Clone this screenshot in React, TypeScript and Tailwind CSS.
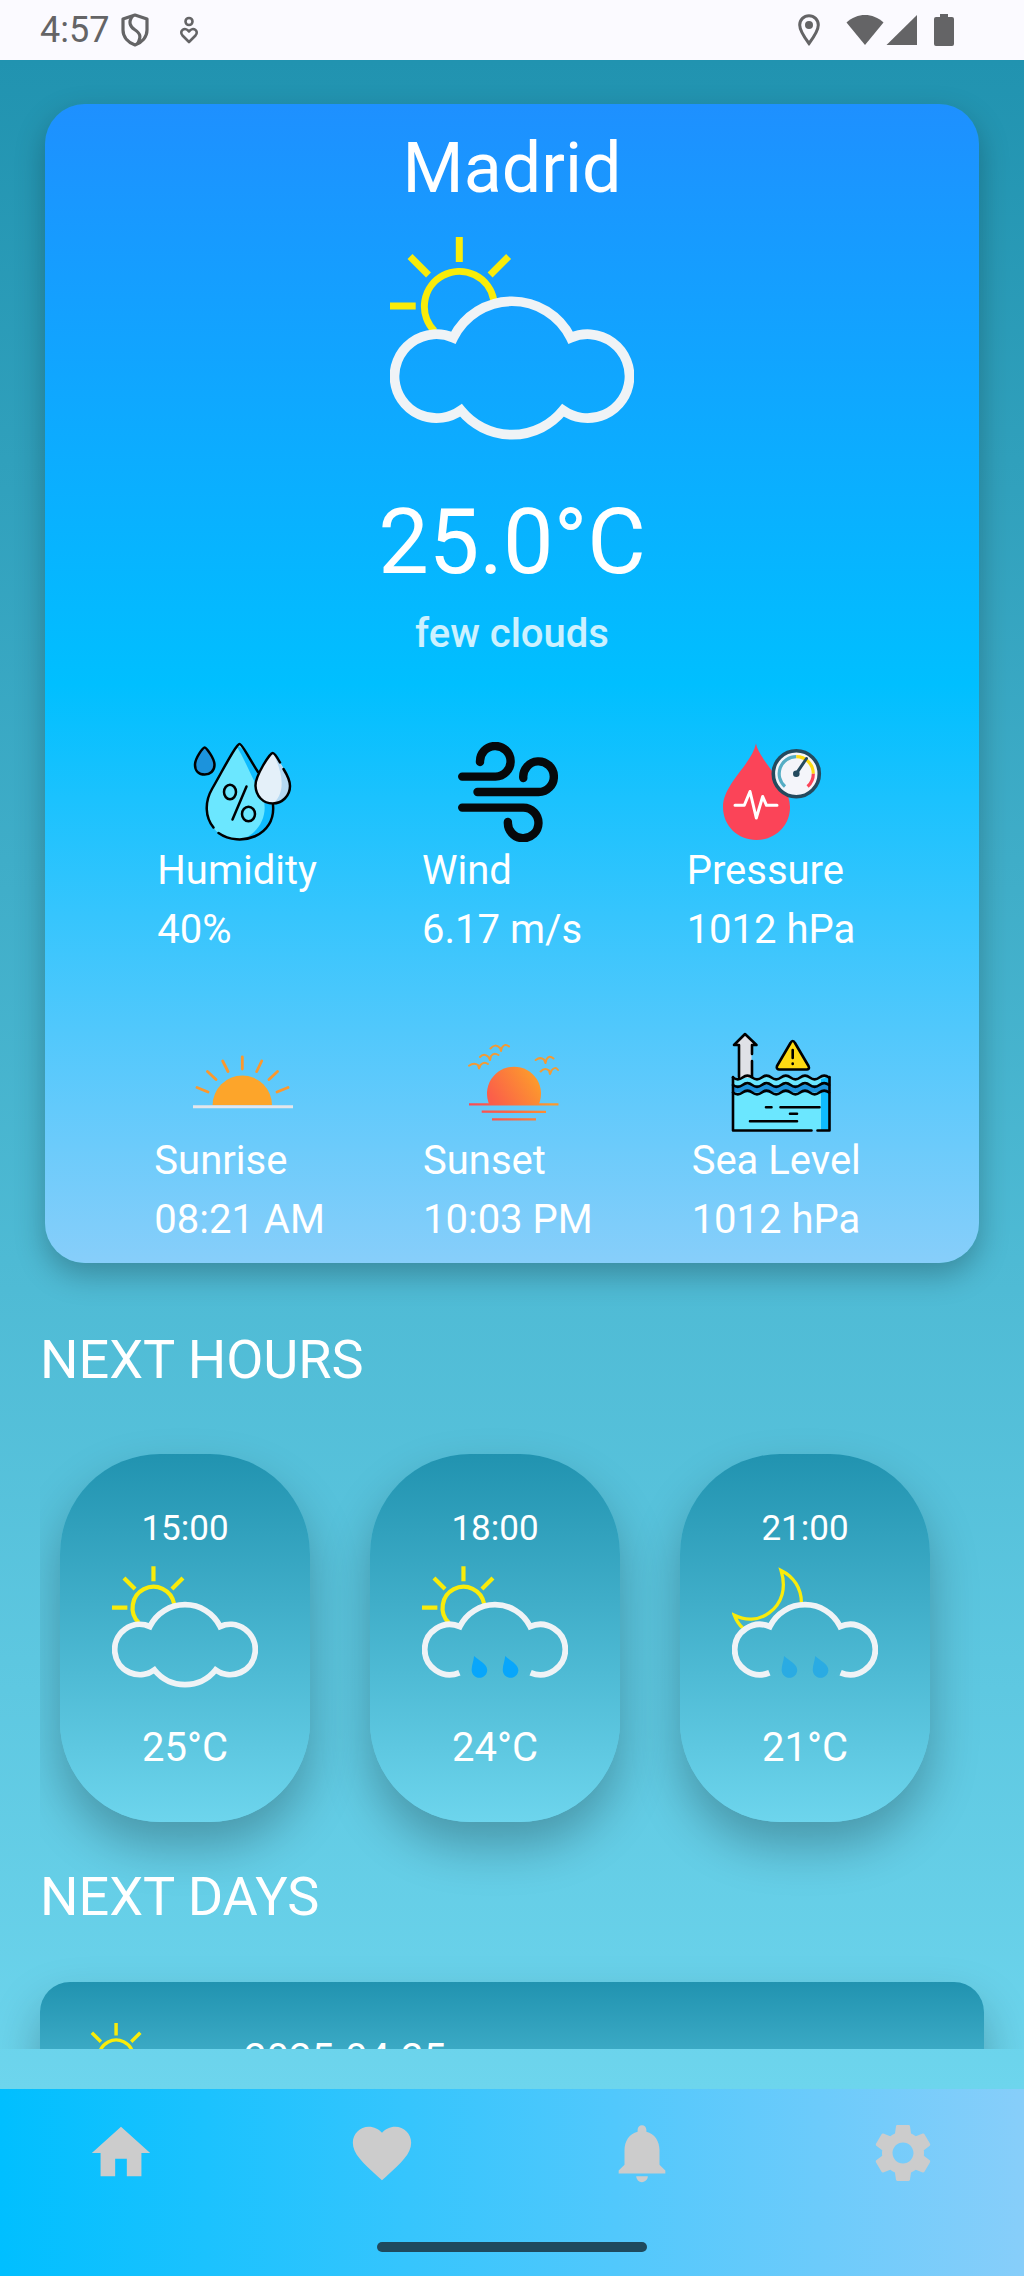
import type { ReactNode } from "react";
import { MdFavorite, MdHome, MdNotifications, MdSettings } from "react-icons/md";

type Sky = "few-clouds" | "rain-day" | "rain-night";

const CLOUD =
  "M63.3 100.7A65.5 65.5 0 0 1 180.7 100.7A42 42 0 1 1 173 173.3A65.5 65.5 0 0 1 71 173.3A42 42 0 1 1 63.3 100.7Z";
const OPEN_CLOUD =
  "M62.5 178A42 42 0 1 1 63.3 100.7A65.5 65.5 0 0 1 180.7 100.7A42 42 0 1 1 181.5 178";
const RAINDROP =
  "M87 150C94 157 109 163 109 173.5C109 181 103 186.5 96 186.5C89 186.5 83 181 83 173C83 165 86.5 158 87 150Z";

function SkyIcon({ sky, className }: { sky: Sky; className: string }) {
  return (
    <svg viewBox="0 0 244 203" className={className} fill="none" aria-hidden="true">
      <g stroke="#f9ec0a">
        {sky === "rain-night" ? (
          <path
            d="M18 103C11 97 7 90 4 82C22 91 44 91 62 78C84 62 91 36 82 7C103 17 116 37 116 61"
            strokeWidth="5.5"
          />
        ) : (
          <path
            d="M44.5 94A35 35 0 1 1 103.8 63M69.3 0V25M0 69H25.7M20 19.5L38.5 38M118.6 19.5L100.1 38"
            strokeWidth="7"
          />
        )}
      </g>
      <path d={sky === "few-clouds" ? CLOUD : OPEN_CLOUD} stroke="#eff3f6" strokeWidth="9.7" />
      {sky !== "few-clouds" && (
        <g fill={sky === "rain-day" ? "#08a6fb" : "#2aabe3"}>
          <path d={RAINDROP} />
          <path d={RAINDROP} transform="translate(52 0)" />
        </g>
      )}
    </svg>
  );
}

function StatIcon({ children }: { children: ReactNode }) {
  return (
    <svg viewBox="0 0 100 100" className="size-[100px]" fill="none" aria-hidden="true">
      {children}
    </svg>
  );
}

function HumidityIcon() {
  return (
    <StatIcon>
      <path d="M46.7 2C44 2 30 28 19 46C5 71 20 98 46.7 98C73 98 88 71 74 46C64 28 50 2 46.7 2Z" fill="#6be7ff" />
      <path d="M44 5C49 0 65 30 75 47C88 72 72 98 46.7 98C69 92 78 66 67 50C59 36 51 16 44 5Z" fill="#0fbcff" />
      <path d="M79.7 11C77 11 62 34 62.5 44C63 54 70 61 79.7 61C89 61 96.5 54 96.5 44C96.5 34 82 11 79.7 11Z" fill="#e4f0f9" />
      <path d="M81 13C87 21 97 34 96.5 44C96 54 89 61 81 61C94 48 88 28 81 13Z" fill="#b5d9f3" />
      <g stroke="#000" strokeWidth="2.5" strokeLinecap="round">
        <path
          d="M11.7 5.5C10 5.5 2 16 2 23C2 29 6 32.5 11.7 32.5C17 32.5 21.5 29 21.5 23C21.5 16 13 5.5 11.7 5.5Z"
          fill="#1c93dc"
        />
        <path d="M20.5 85.5C12 75 11.5 60 19 47C30 28 43 2 46.7 2C49 2 56 16 65 30" />
        <path d="M25.5 91C47 106 83 94 80 63" />
        <path d="M87 20.5C84 15 81 11 79.7 11C77 11 62 34 62.5 44C63 54 70 61.5 79.7 61.5C89 61.5 97 54 97 44C97 38 93 31 90.5 27" />
        <ellipse cx="37" cy="50" rx="6" ry="7.3" />
        <ellipse cx="55.5" cy="72" rx="6.5" ry="7.3" />
        <path d="M53.5 44.5L39.5 77.5" />
      </g>
    </StatIcon>
  );
}

function WindIcon() {
  return (
    <StatIcon>
      <g stroke="#06090b" strokeWidth="8.4" strokeLinecap="round">
        <path d="M4.2 34.6H37.5A15.3 15.3 0 1 0 22 20" />
        <path d="M19.5 50H80.5A15.3 15.3 0 1 0 65.3 36" />
        <path d="M4.2 65.6H65.2A15.3 15.3 0 1 1 49.9 80" />
      </g>
    </StatIcon>
  );
}

function PressureIcon() {
  return (
    <StatIcon>
      <path d="M33 1.5C34 8 40 17 49 29C57 40 67 51 67 65C67 84 52 98 33.5 98C15 98 0 84 0 65C0 42 29 22 33 1.5Z" fill="#fb4458" />
      <path
        d="M12 63.3H21.3L27 49.5L33.3 76L39.7 54.5L43.5 63.3H54"
        stroke="#fff"
        strokeWidth="3"
        strokeLinecap="round"
        strokeLinejoin="round"
      />
      <circle cx="73.3" cy="31.7" r="23" fill="#f4f5fa" stroke="#244a5e" strokeWidth="3.6" />
      <g strokeWidth="3.2">
        <path d="M62 44.5A17 17 0 0 1 73.3 14.7" stroke="#55adc4" />
        <path d="M73.3 14.7A17 17 0 0 1 90.3 31.7" stroke="#fedb13" />
        <path d="M90.3 31.7A17 17 0 0 1 84.6 44.5" stroke="#fb4458" />
      </g>
      <circle cx="73.3" cy="31.7" r="3.3" fill="#244a5e" />
      <path d="M73.3 31.7L83.5 16.5" stroke="#244a5e" strokeWidth="3" strokeLinecap="round" />
    </StatIcon>
  );
}

function SunriseIcon() {
  return (
    <StatIcon>
      <path d="M19.6 73.3A29.7 29.7 0 0 1 79 73.3Z" fill="#fda52a" />
      <path d="M0 74.8H100" stroke="#e4e6eb" strokeWidth="3" />
      <path
        d="M49.3 25V37M29.7 29L35 39.5M68.7 29L63.7 39.5M14.5 39.5L23 47.5M84.5 39.5L76 47.5M4 55.5L15 60M95 55.5L84 60"
        stroke="#fc982d"
        strokeWidth="2.8"
        strokeLinecap="round"
      />
    </StatIcon>
  );
}

function SunsetIcon() {
  return (
    <StatIcon>
      <defs>
        <linearGradient id="dusk" x1="10" y1="88" x2="85" y2="40" gradientUnits="userSpaceOnUse">
          <stop stopColor="#fb4458" />
          <stop offset="0.35" stopColor="#fb6248" />
          <stop offset="0.85" stopColor="#fc992d" />
        </linearGradient>
      </defs>
      <path d="M27.5 73A27 27 0 1 1 76.5 73Z" fill="url(#dusk)" />
      <path d="M7 72.3L96.5 72.4M19.7 79.7L84 79.8M30 87.3L74 87.4" stroke="url(#dusk)" strokeWidth="2.3" />
      <path
        d="M28.5 16.5Q33 11 38 16L39 19L40 15.5Q43 11 47 14.5M18 25Q22 20.5 26.5 25L28 28L29 24Q32 20 36.5 23M7 33.7Q12 30 16 33L17 36.5L18.5 33Q22 29 26 32M73.7 28Q78 24.5 82 27.5L83.5 31L84.5 27.5Q87 22.5 91.5 26.5M78.7 39.5Q82.5 35 87 38.5L88 42L89.5 38.5Q93 34 96 38"
        stroke="#f39a34"
        strokeWidth="2"
        strokeLinecap="round"
        strokeLinejoin="round"
      />
    </StatIcon>
  );
}

const WAVE = "q4.8 3.6 9.6 0t9.6 0t9.6 0t9.6 0t9.6 0t9.6 0t9.6 0t9.6 0t9.6 0t9.6 0";

function SeaLevelIcon() {
  return (
    <StatIcon>
      <path d={`M2 45.5${WAVE}V98H2Z`} fill="#6be7ff" />
      <path d="M90 47L98 45V98H90Z" fill="#0fbcff" />
      <path d="M2 53L98 53V60.5L2 60.5Z" fill="#1c93dc" />
      <path d="M8 46V12.5H3L14 1.5L25 12.5H20.5V46Z" fill="#dfe1e6" />
      <g stroke="#000" strokeWidth="2.6" strokeLinecap="round" strokeLinejoin="round">
        <path d="M8 45V13H3L14 2L25.5 13H21V22M21 29V45" />
        <path
          d="M61.7 9Q60.5 9 59.5 11L46 34Q45 37 48 37.5H76Q79 37 77.5 34L64 11Q63 9 61.7 9ZM61.7 18V26M61.7 31.5V32"
          fill="#fedb13"
        />
        <path d={`M2 45.5${WAVE}M2 53${WAVE}M2 60.5${WAVE}`} />
        <path d="M80.5 98.5H2V45M98.5 45V98.5H86.5" />
        <path d="M35 75.3H40.5M49.5 75.3H88.5M59 81.7H66M19 89.3H66" />
      </g>
    </StatIcon>
  );
}

const STAT_ROWS = [
  {
    rowClass: "pl-[66px] pr-[74px]",
    itemClass: "w-[172px]",
    stats: [
      { label: "Humidity", value: "40%", icon: <HumidityIcon /> },
      { label: "Wind", value: "6.17 m/s", icon: <WindIcon /> },
      { label: "Pressure", value: "1012 hPa", icon: <PressureIcon /> },
    ],
  },
  {
    rowClass: "px-16",
    itemClass: "w-[178px]",
    stats: [
      { label: "Sunrise", value: "08:21 AM", icon: <SunriseIcon /> },
      { label: "Sunset", value: "10:03 PM", icon: <SunsetIcon /> },
      { label: "Sea Level", value: "1012 hPa", icon: <SeaLevelIcon /> },
    ],
  },
];

const HOURS: { time: string; sky: Sky; temp: string }[] = [
  { time: "15:00", sky: "few-clouds", temp: "25°C" },
  { time: "18:00", sky: "rain-day", temp: "24°C" },
  { time: "21:00", sky: "rain-night", temp: "21°C" },
];

const TABS = [
  { label: "Home", Icon: MdHome },
  { label: "Favorites", Icon: MdFavorite },
  { label: "Notifications", Icon: MdNotifications },
  { label: "Settings", Icon: MdSettings },
];

function StatusBar() {
  return (
    <header className="flex h-[60px] shrink-0 items-center bg-[#fbfaff] pl-10 pr-[70px] text-[#646466]">
      <span className="text-[36px] leading-[42px]">4:57</span>
      <svg viewBox="0 0 28 34" className="ml-3 h-[34px] w-7" fill="none" stroke="currentColor" strokeWidth="3.2" aria-hidden="true">
        <path d="M14 2L26 6V17C26 24 21 29.5 14 32C7 29.5 2 24 2 17V6Z" strokeLinejoin="round" />
        <path d="M11.500 3C7 9 9 13.500 13.500 16.500C19.500 20.500 20.500 23.500 16.500 31" />
      </svg>
      <svg viewBox="0 0 20 28" className="ml-[30px] h-7 w-5" fill="none" stroke="currentColor" strokeWidth="2.6" aria-hidden="true">
        <circle cx="10" cy="5.5" r="3.5" />
        <path d="M10 26L3.5 19.5C-0.5 15 6 10 10 15.5C14 10 20.5 15 16.5 19.5Z" strokeLinejoin="round" />
      </svg>
      <div className="ml-auto flex items-center">
        <svg viewBox="0 0 22 32" className="h-8 w-[22px]" fill="none" aria-hidden="true">
          <path d="M11 29.5C5 21.5 1.7 16 1.7 11A9.3 9.3 0 0 1 20.3 11C20.3 16 17 21.5 11 29.5Z" stroke="currentColor" strokeWidth="3" />
          <circle cx="11" cy="11" r="4" fill="currentColor" />
        </svg>
        <svg viewBox="0 0 38 32" className="ml-[26px] h-8 w-[38px]" fill="currentColor" aria-hidden="true">
          <path d="M19 31L0.5 8.5C11 -1.5 27 -1.5 37.5 8.5Z" />
        </svg>
        <svg viewBox="0 0 32 32" className="ml-0.5 size-8" fill="currentColor" aria-hidden="true">
          <path d="M31 1V31H0.5Z" />
        </svg>
        <svg viewBox="0 0 20 32" className="ml-4 h-8 w-5" fill="currentColor" aria-hidden="true">
          <path d="M6 0H14V3H18Q20 3 20 5V30Q20 32 18 32H2Q0 32 0 30V5Q0 3 2 3H6Z" />
        </svg>
      </div>
    </header>
  );
}

function CurrentWeather() {
  return (
    <section className="mx-[45px] flex flex-col items-center rounded-[40px] bg-linear-to-b/srgb from-[#1e90ff] via-[#00bfff] to-[#87cefa] pt-[22px] pb-[13px] shadow-[0_12px_30px_rgba(0,0,0,0.26)]">
      <h1 className="text-[70px] leading-[84px]">Madrid</h1>
      <SkyIcon sky="few-clouds" className="mt-[27px] h-[203px] w-[244px]" />
      <p className="mt-[50px] text-[90px] leading-[106px]">25.0°C</p>
      <p className="mt-2 text-[40px] leading-[60px] font-medium text-white/80">few clouds</p>
      <div className="mt-[78px] flex w-full flex-col gap-[72px]">
        {STAT_ROWS.map((row) => (
          <dl key={row.stats[0].label} className={`flex justify-around ${row.rowClass}`}>
            {row.stats.map((stat) => (
              <div key={stat.label} className={`flex flex-col ${row.itemClass}`}>
                <span className="self-center">{stat.icon}</span>
                <dt className="text-[40px] leading-[58px]">{stat.label}</dt>
                <dd className="text-[40px] leading-[60px]">{stat.value}</dd>
              </div>
            ))}
          </dl>
        ))}
      </div>
    </section>
  );
}

function NextHours() {
  return (
    <section className="mx-10 mt-[65px]">
      <h2 className="text-[54px] leading-[64px]">NEXT HOURS</h2>
      <ul className="mt-[62px] flex gap-[60px] overflow-x-clip px-5">
        {HOURS.map((hour) => (
          <li
            key={hour.time}
            className="flex w-[250px] shrink-0 flex-col items-center rounded-[100px] bg-linear-to-b/srgb from-[#2193b0] to-[#6dd5ed] pt-[54px] pb-11 shadow-[0_24px_48px_rgba(0,0,0,0.26)]"
          >
            <span className="text-[35px] leading-[42px]">{hour.time}</span>
            <SkyIcon sky={hour.sky} className="mt-4 h-[122px] w-[146px]" />
            <span className="mt-[30px] text-[40px] leading-[60px]">{hour.temp}</span>
          </li>
        ))}
      </ul>
    </section>
  );
}

function NextDays() {
  return (
    <section className="mx-10 mt-[43px]">
      <h2 className="text-[54px] leading-[64px]">NEXT DAYS</h2>
      <div className="mt-[53px] flex h-[200px] rounded-[30px] bg-linear-to-b/srgb from-[#2193b0] to-[#6dd5ed] pl-[42px] shadow-[0_24px_48px_rgba(0,0,0,0.26)]">
        <SkyIcon sky="few-clouds" className="mt-[41px] h-[100px] w-[120px]" />
        <span className="mt-[47px] ml-[42px] text-[40px] leading-[60px]">2025-04-25</span>
      </div>
    </section>
  );
}

function TabBar() {
  return (
    <footer className="flex shrink-0 flex-col items-center bg-linear-to-r/srgb from-[#00bfff] to-[#87cefa] pt-[29px] pb-6">
      <nav className="flex w-full justify-between px-[86px]">
        {TABS.map(({ label, Icon }) => (
          <button key={label} type="button" aria-label={label} className="text-[#cccccc]">
            <Icon className="size-[70px]" />
          </button>
        ))}
      </nav>
      <div className="mt-[54px] h-2.5 w-[270px] rounded-full bg-[#1f4a5e]" />
    </footer>
  );
}

export default function App() {
  return (
    <div className="flex h-screen flex-col font-['Roboto',sans-serif] text-white">
      <StatusBar />
      <main className="flex min-h-0 flex-1 flex-col bg-linear-to-b/srgb from-[#2193b0] to-[#6dd5ed] pb-10">
        <div className="min-h-0 flex-1 overflow-y-auto pt-11 pb-10 [scrollbar-width:none]">
          <CurrentWeather />
          <NextHours />
          <NextDays />
        </div>
      </main>
      <TabBar />
    </div>
  );
}
